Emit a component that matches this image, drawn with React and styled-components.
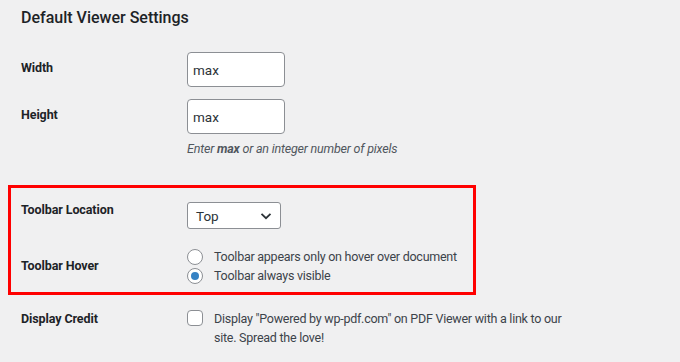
import React from "react";
import styled, { createGlobalStyle } from "styled-components";

const Global = createGlobalStyle`
  html, body { margin: 0; padding: 0; background: #f0f0f1; }
  body { font-family: Roboto, "Open Sans", sans-serif; color: #3c434a; }
  * { box-sizing: border-box; }
`;

const Page = styled.div`
  width: 680px;
  height: 362px;
  overflow: hidden;
  padding: 6px 0 0 21px;
`;

const Title = styled.h2`
  margin: 0;
  font-size: 16px;
  line-height: 24px;
  font-weight: 500;
  color: #1d2327;
`;

const Row = styled.div`
  display: grid;
  grid-template-columns: 166px auto;
  align-items: ${(p) => p.$align || "start"};
  margin-top: ${(p) => p.$mt || 0}px;
`;

const Label = styled.div`
  font-size: 12.5px;
  font-weight: 700;
  letter-spacing: -0.1px;
  line-height: 20px;
  color: #1d2327;
  padding-top: ${(p) => p.$pt || 0}px;
`;

const Field = styled.div`
  display: flex;
  flex-direction: column;
  align-items: flex-start;
`;

const TextInput = styled.input`
  width: 98px;
  height: 35px;
  padding: 0 5px;
  border: 1px solid #8c8f94;
  border-radius: 4px;
  background: #fff;
  font-family: inherit;
  font-size: 13.5px;
  color: #2c3338;
  outline: none;
`;

const Help = styled.p`
  margin: 5px 0 0;
  font-size: 12.5px;
  letter-spacing: -0.2px;
  line-height: 20px;
  font-style: italic;
  color: #50575e;
`;

const Highlight = styled.div`
  width: 468px;
  margin: 26px 0 0 -13px;
  padding: 12px 0 7px 10px;
  border: 3px solid #ff0000;
`;

const SelectBox = styled.div`
  margin-top: 2px;
  width: 94px;
  height: 27px;
  display: flex;
  align-items: center;
  justify-content: space-between;
  padding: 0 8px 0 8px;
  border: 1px solid #8c8f94;
  border-radius: 3px;
  background: #fff;
  font-size: 13.5px;
  color: #2c3338;
`;

const Options = styled.div`
  display: flex;
  flex-direction: column;
`;

const Option = styled.label`
  display: flex;
  align-items: center;
  gap: 11px;
  height: 19px;
  font-size: 12.5px;
  letter-spacing: -0.25px;
  line-height: 19px;
  white-space: nowrap;
  color: #3c434a;
`;

const Radio = styled.span`
  position: relative;
  flex: none;
  width: 16px;
  height: 16px;
  border: 1px solid #8c8f94;
  border-radius: 50%;
  background: #fff;
  &::after {
    content: "";
    display: ${(p) => (p.$checked ? "block" : "none")};
    position: absolute;
    left: 3px;
    top: 3px;
    width: 8px;
    height: 8px;
    border-radius: 50%;
    background: #3582c4;
  }
`;

const CheckRow = styled.div`
  display: flex;
  align-items: flex-start;
  gap: 11px;
`;

const Checkbox = styled.span`
  flex: none;
  margin-top: 1px;
  width: 16px;
  height: 16px;
  border: 1px solid #8c8f94;
  border-radius: 4px;
  background: #fff;
`;

const CheckText = styled.div`
  width: 356px;
  font-size: 12.5px;
  letter-spacing: -0.25px;
  line-height: 19px;
  color: #3c434a;
`;

const Chevron = () => (
  <svg width="12" height="8" viewBox="0 0 12 8" fill="none">
    <path d="M1.5 1.8 6 6.2l4.5-4.4" stroke="#2c3338" strokeWidth="1.8" />
  </svg>
);

export default function App() {
  return (
    <Page>
      <Global />
      <Title>Default Viewer Settings</Title>
      <Row $mt={22}>
        <Label $pt={6}>Width</Label>
        <Field>
          <TextInput readOnly value="max" />
        </Field>
      </Row>
      <Row $mt={12}>
        <Label $pt={6}>Height</Label>
        <Field>
          <TextInput readOnly value="max" />
          <Help>
            Enter <b>max</b> or an integer number of pixels
          </Help>
        </Field>
      </Row>
      <Highlight>
        <Row>
          <Label>Toolbar Location</Label>
          <Field>
            <SelectBox>
              <span>Top</span>
              <Chevron />
            </SelectBox>
          </Field>
        </Row>
        <Row $mt={18} $align="center">
          <Label>Toolbar Hover</Label>
          <Options>
            <Option>
              <Radio />
              Toolbar appears only on hover over document
            </Option>
            <Option>
              <Radio $checked />
              Toolbar always visible
            </Option>
          </Options>
        </Row>
      </Highlight>
      <Row $mt={14}>
        <Label>Display Credit</Label>
        <CheckRow>
          <Checkbox />
          <CheckText>
            Display "Powered by wp-pdf.com" on PDF Viewer with a link to our site. Spread the love!
          </CheckText>
        </CheckRow>
      </Row>
    </Page>
  );
}
